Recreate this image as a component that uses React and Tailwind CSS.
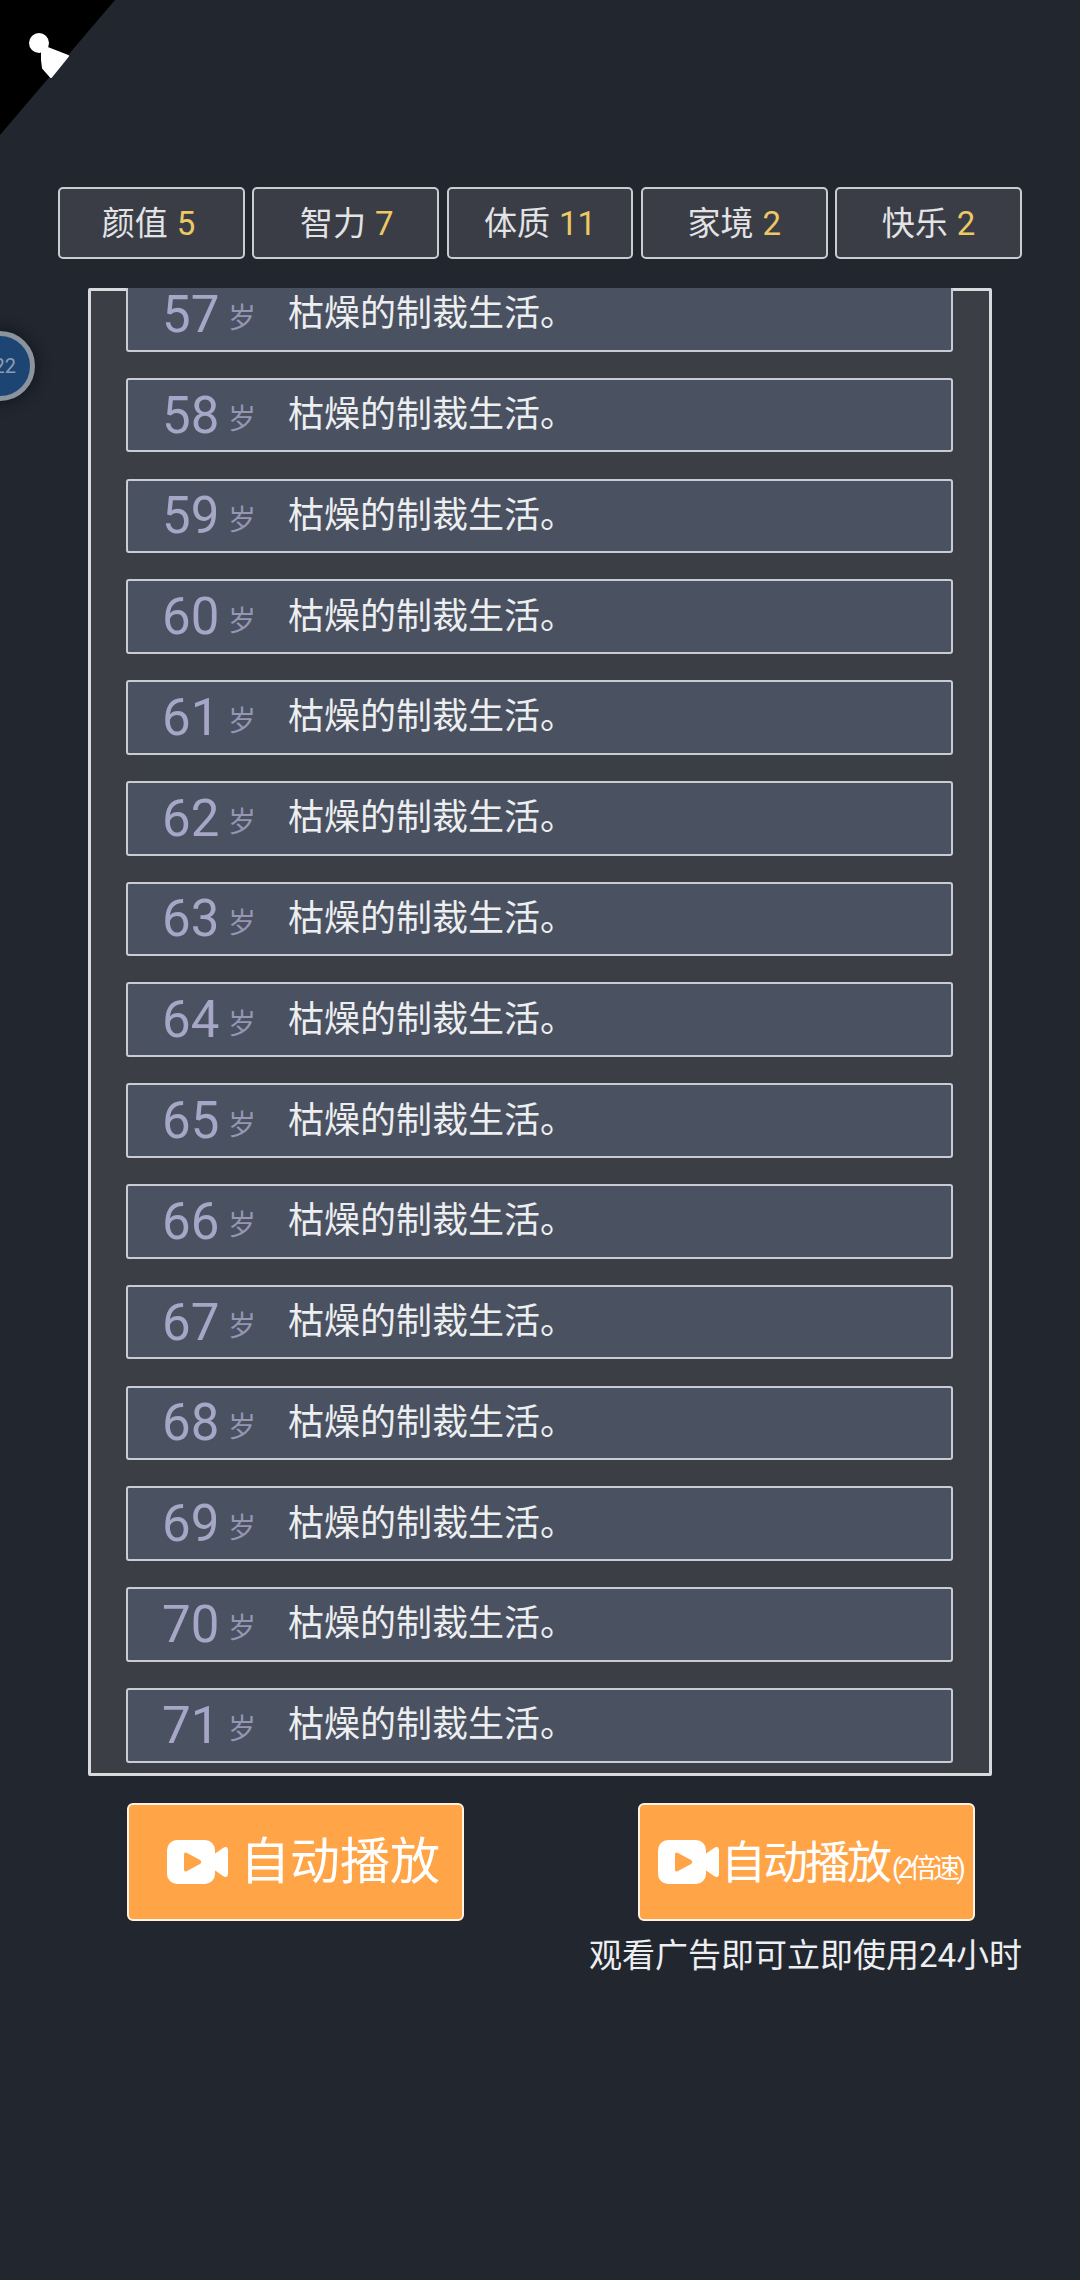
const FONT = "font-['Roboto','Noto_Sans_CJK_SC',sans-serif]";
const stats = [["颜值", "5", "mr-[6px]"], ["智力", "7", "ml-[2px]"], ["体质", "11", ""], ["家境", "2", ""], ["快乐", "2", ""]];
const ages = Array.from({ length: 15 }, (_, i) => 57 + i);

function VideoIcon({ fill = "#ffa447" }) {
  return (
    <svg viewBox="0 0 61 44" className="w-[61px] h-[44px] shrink-0">
      <rect x="0" y="0" width="48" height="44" rx="10" fill="#fff" />
      <path d="M46 15 L56 8 Q61 5 61 11 L61 33 Q61 39 56 36 L46 29 Z" fill="#fff" />
      <path d="M17 14.5 Q17 11.5 20 13 L33 20 Q35.500 22 33 24 L20 31 Q17 32.500 17 29.500 Z" fill={fill} />
    </svg>
  );
}

function Row({ age, first }) {
  return (
    <div className={`${first ? "mt-[-11px]" : ""} h-[74.6px] shrink-0 flex items-center rounded-[3px] border-2 border-[#c9ccd3] bg-[#4a5160] pl-[34px]`}>
      <span className="w-[66px] text-[51px] leading-none text-[#a6a7c6]">{age}</span>
      <span className="w-[60px] text-[28px] leading-none text-[#9496b4] mt-[10px]">岁</span>
      <span className="text-[36px] leading-none text-[#eceef0]">枯燥的制裁生活。</span>
    </div>
  );
}

export default function App() {
  return (
    <div className={`${FONT} relative w-[1080px] h-[2280px] overflow-hidden bg-[#22262f] pt-[187px]`}>
      <svg viewBox="0 0 115 135" className="absolute left-0 top-0 w-[115px] h-[135px]">
        <polygon points="0,0 115,0 0,135" fill="#000" />
        <circle cx="39" cy="43" r="10" fill="#fff" />
        <path d="M42 46 L50 49 L68 56 L51 77 L43 68 L42 60 Z" fill="#fff" stroke="#fff" strokeWidth="2" strokeLinejoin="round" />
      </svg>

      <div className="absolute left-[-35px] top-[331px] w-[70px] h-[70px] rounded-full border-[5px] border-[#8b939e] bg-[#1c4573] shadow-[0_0_12px_4px_rgba(15,18,24,0.6)] flex items-center justify-end pr-[14px]">
        <span className="text-[20px] leading-none text-[#8d9db0]">22</span>
      </div>

      <div className="ml-[58px] w-[964px] h-[72px] flex gap-[7.5px]">
        {stats.map(([label, value, nudge]) => (
          <div key={label} className="flex-1 min-w-0 flex items-center justify-center rounded-[5px] border-2 border-[#c9ccd1] bg-[#3a3d45] text-[33px] leading-none text-[#e2e3e5]">
            <div className={`${nudge} flex items-center gap-[9px]`}>
              <span>{label}</span>
              <span className="text-[#ecc964]">{value}</span>
            </div>
          </div>
        ))}
      </div>

      <div className="ml-[88px] mt-[29px] w-[904px] h-[1488px] rounded-[2px] border-[3px] border-[#d8dadd] bg-[#3b3e45] pl-[35px] pr-[36px] pb-[6px]">
        <div className="h-full overflow-hidden flex flex-col gap-[26.2px] mt-[-3px]">
          {ages.map((age, i) => (
            <Row key={age} age={age} first={i === 0} />
          ))}
        </div>
      </div>

      <div className="mt-[27px] ml-[127px] w-[848px] h-[118px] flex justify-between">
        <div className="w-[337px] flex items-center rounded-[6px] border-2 border-[#fff3e4] bg-[#ffa447] pl-[38px] gap-[12px] text-white">
          <VideoIcon />
          <span className="text-[50px] leading-none">自动播放</span>
        </div>
        <div className="w-[337px] flex items-center rounded-[6px] border-2 border-[#fff3e4] bg-[#ffa447] pl-[18px] text-white">
          <VideoIcon />
          <span className="ml-[2px] mt-[2px] text-[45px] leading-none tracking-[-3px]">自动播放</span>
          <span className="ml-[3px] text-[27px] leading-none tracking-[-3.5px] mt-[14px] whitespace-nowrap">(2倍速)</span>
        </div>
      </div>

      <div className="mt-[13px] mr-[58px] text-right text-[33px] leading-[44px] text-[#eceef0]">观看广告即可立即使用24小时</div>
    </div>
  );
}
